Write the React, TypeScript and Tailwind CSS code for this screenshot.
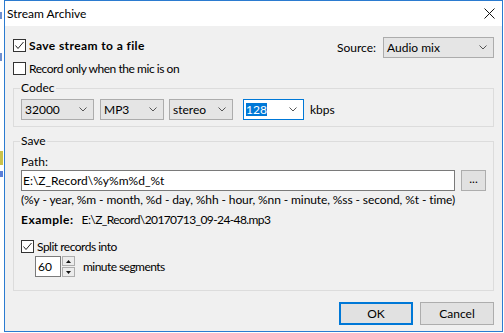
import React from 'react';

function CheckBox({ checked }: { checked?: boolean }) {
  return (
    <span className="flex h-[13px] w-[13px] shrink-0 items-center justify-center border border-[#333333] bg-white">
      {checked && (
        <svg width="11" height="11" viewBox="0 0 11 11">
          <path d="M1.5 5.5 L4 8.5 L9.5 2" fill="none" stroke="#222222" strokeWidth="1" />
        </svg>
      )}
    </span>
  );
}

function Chevron() {
  return (
    <svg width="8" height="5" viewBox="0 0 8 5" className="shrink-0">
      <path d="M0.5 0.5 L4 4 L7.5 0.5" fill="none" stroke="#555555" strokeWidth="1" />
    </svg>
  );
}

function Combo({ value, className }: { value: string; className: string }) {
  return (
    <div className={`flex h-[21px] items-center justify-between border border-[#acacac] bg-[#e5e5e5] pl-[3px] pr-[6px] ${className}`}>
      <span>{value}</span>
      <Chevron />
    </div>
  );
}

function Triangle({ up }: { up?: boolean }) {
  return (
    <svg width="5" height="3" viewBox="0 0 5 3">
      <path d={up ? 'M0 3 L2.5 0 L5 3 Z' : 'M0 0 L2.5 3 L5 0 Z'} fill="#111111" />
    </svg>
  );
}

export default function App() {
  return (
    <div className="flex h-[333px] w-[504px] overflow-hidden bg-white font-['Lato','Liberation_Sans',sans-serif] text-[12px] leading-[16px] text-black">
      {/* bits of the window behind */}
      <div className="flex w-[4px] flex-col">
        <div className="h-[12px]" />
        <div className="h-[7px] w-[2px] bg-[#6d8fd0]" />
        <div className="h-[34px]" />
        <div className="h-[8px] w-[2px] bg-[#6d8fd0]" />
        <div className="h-[90px]" />
        <div className="h-[14px] w-[3px] bg-[#c9c24a]" />
        <div className="h-[6px]" />
        <div className="h-[6px] w-[3px] bg-[#5a7fd8]" />
      </div>

      <div className="flex h-[332px] w-[499px] flex-col border border-[#2b7bd0]">
        {/* title bar */}
        <div className="flex h-[25px] shrink-0 items-center justify-between bg-white pl-[2px] pr-[7px]">
          <span>Stream Archive</span>
          <svg width="11" height="11" viewBox="0 0 11 11">
            <path d="M0.5 0.5 L10.5 10.5 M10.5 0.5 L0.5 10.5" stroke="#111111" strokeWidth="1" />
          </svg>
        </div>

        <div className="flex flex-1 flex-col bg-[#f0f0f0] px-[8px]">
          {/* save + source */}
          <div className="mt-[11px] flex items-start justify-between">
            <label className="mt-[2px] flex h-[13px] items-center gap-[3px] font-bold tracking-[0.4px]">
              <CheckBox checked />
              <span>Save stream to a file</span>
            </label>
            <div className="flex items-center gap-[7px]">
              <span>Source:</span>
              <Combo value="Audio mix" className="w-[111px]" />
            </div>
          </div>

          <label className="mt-[4px] flex h-[13px] items-center gap-[3px] tracking-[-0.45px]">
            <CheckBox />
            <span>Record only when the mic is on</span>
          </label>

          {/* codec */}
          <fieldset className="mt-[5px] border border-[#dcdcdc] px-[7px] pb-[6px]">
            <legend className="ml-[-1px] px-[1px]">Codec</legend>
            <div className="mt-[3px] flex items-center">
              <Combo value="32000" className="w-[73px]" />
              <Combo value="MP3" className="ml-[6px] w-[64px]" />
              <Combo value="stereo" className="ml-[5px] w-[64px]" />
              <div className="ml-[10px] flex h-[21px] w-[61px] items-center justify-between border border-[#0078d7] bg-white pl-[2px] pr-[6px]">
                <span className="bg-[#0078d7] leading-[13px] text-white">128</span>
                <Chevron />
              </div>
              <span className="ml-[6px]">kbps</span>
            </div>
          </fieldset>

          {/* save */}
          <fieldset className="mt-[6px] border border-[#dcdcdc] px-[7px] pb-[13px]">
            <legend className="ml-[-1px] px-[1px]">Save</legend>
            <div className="mt-[5px]">Path:</div>
            <div className="flex items-center gap-[6px]">
              <div className="flex h-[21px] flex-1 items-center border border-[#7a7a7a] bg-white pl-[1px]">
                {'E:\\Z_Record\\%y%m%d_%t'}
              </div>
              <button className="flex h-[21px] w-[25px] items-center justify-center border border-[#adadad] bg-[#e1e1e1] pb-[3px]">
                ...
              </button>
            </div>
            <div className="mt-[1px] tracking-[-0.1px]">
              (%y - year, %m - month, %d - day, %hh - hour, %nn - minute, %ss - second, %t - time)
            </div>
            <div className="mt-[4px] flex gap-[8px]">
              <span className="font-bold tracking-[0.5px]">Example:</span>
              <span className="tracking-[-0.6px]">{'E:\\Z_Record\\20170713_09-24-48.mp3'}</span>
            </div>
            <label className="mt-[12px] flex h-[13px] items-center gap-[3px] tracking-[-0.5px]">
              <CheckBox checked />
              <span>Split records into</span>
            </label>
            <div className="mt-[3px] flex items-center pl-[14px]">
              <div className="flex h-[21px] w-[26px] items-center border border-[#7a7a7a] bg-white pl-[2px]">60</div>
              <div className="ml-[1px] flex flex-col gap-[1px]">
                <div className="flex h-[10px] w-[13px] items-center justify-center border border-[#adadad] bg-[#ececec]">
                  <Triangle up />
                </div>
                <div className="flex h-[10px] w-[13px] items-center justify-center border border-[#adadad] bg-[#ececec]">
                  <Triangle />
                </div>
              </div>
              <span className="ml-[8px] tracking-[-0.55px]">minute segments</span>
            </div>
          </fieldset>

          {/* buttons */}
          <div className="mt-[11px] flex justify-end gap-[7px]">
            <button className="h-[23px] w-[74px] border-2 border-[#0078d7] bg-[#e1e1e1]">OK</button>
            <button className="h-[23px] w-[74px] border border-[#adadad] bg-[#e1e1e1]">Cancel</button>
          </div>
        </div>
      </div>
    </div>
  );
}
